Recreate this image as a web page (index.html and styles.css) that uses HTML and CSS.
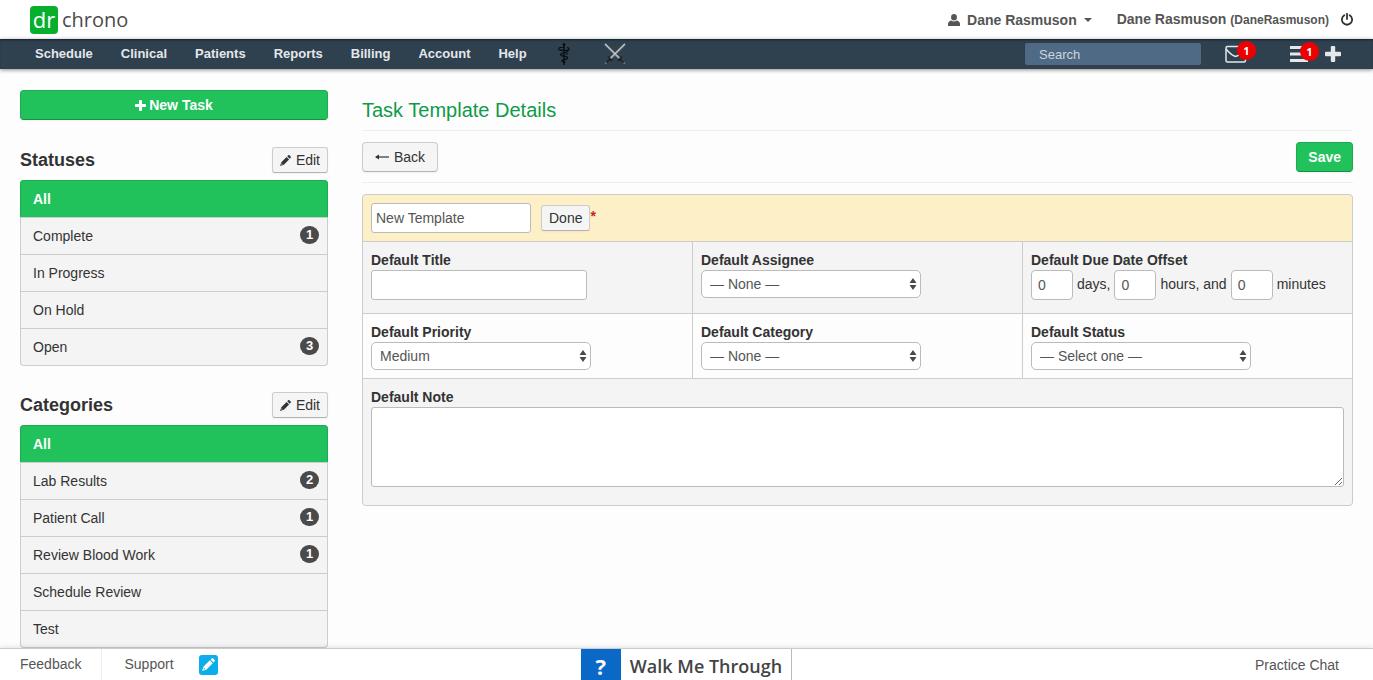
FILE: index.html
```html
<!DOCTYPE html>
<html lang="en">
<head>
<meta charset="utf-8">
<title>Task Template Details</title>
<link rel="stylesheet" href="styles.css">
</head>
<body>
<svg class="defs" aria-hidden="true">
  <symbol id="pencil" viewBox="0 0 12 12"><path d="M7.900 1.400 8.900.4Q9.600-.2 10.300.4L11.600 1.700Q12.200 2.400 11.600 3.100L10.600 4.100ZM7.200 2.100 9.900 4.800 4.200 10.500 0 12 1.500 7.800ZM1.900 9.100 1.500 10.500 2.900 10.100Z" fill-rule="evenodd"/></symbol>
  <symbol id="arrows" viewBox="0 0 8 12"><path d="M4 0 7.500 5H.5ZM4 12 .5 7H7.500Z"/></symbol>
  <symbol id="plus" viewBox="0 0 16 16"><path d="M5.800 1Q5.800 0 6.800 0H9.200Q10.200 0 10.200 1V5.800H15Q16 5.800 16 6.800V9.200Q16 10.200 15 10.200H10.200V15Q10.200 16 9.200 16H6.800Q5.800 16 5.800 15V10.200H1Q0 10.200 0 9.200V6.800Q0 5.800 1 5.800H5.800Z"/></symbol>
</svg>

<header class="top">
  <a class="logo" href="#"><span class="logo-mark">dr</span><span class="logo-text">chrono</span></a>
  <div class="account">
    <button class="user" type="button">
      <svg width="12" height="12" viewBox="0 0 12 12"><ellipse cx="6" cy="3.300" rx="2.900" ry="3.300"/><path d="M0 12V10Q0 7.500 3.300 6.500 6 8.600 8.700 6.500 12 7.500 12 10V12Z"/></svg>
      <span>Dane Rasmuson</span>
      <span class="caret"></span>
    </button>
    <a class="profile" href="#">Dane Rasmuson <small>(DaneRasmuson)</small></a>
    <button class="power" type="button" aria-label="Log out"><svg width="12" height="13" viewBox="0 0 12 13"><path d="M3.300 2.300A5.100 5.100 0 1 0 8.700 2.300M6 .8V6" fill="none" stroke="currentColor" stroke-width="1.800" stroke-linecap="round"/></svg></button>
  </div>
</header>

<nav class="nav">
  <div class="menu">
    <a href="#">Schedule</a><a href="#">Clinical</a><a href="#">Patients</a><a href="#">Reports</a><a href="#">Billing</a><a href="#">Account</a><a href="#">Help</a>
    <a class="caduceus" href="#" aria-label="Medical"><svg width="12" height="22" viewBox="0 0 12 22"><g fill="none" stroke="#0b0f13"><path d="M6 0V22" stroke-width="1.500"/><path d="M6 4.500H2Q.3 5 1 6.500 2 7.500 6 7.500 10.500 7.500 11 6 11.300 4.500 9 4.700M11 6Q10.500 9 6 9.800 2.500 10.500 2.500 11.800 3 13 6 13.200 9.500 13.500 9.500 15 9 16.500 6 16.800 3.500 17 4 18.300 4.500 19 7.500 19.300M8.500 11.500Q9.800 10.800 8.500 10" stroke-width="1.200"/></g><circle cx="6" cy="2" r="1.400"/></svg></a>
    <a class="swords" href="#" aria-label="Swords"><svg width="22" height="22" viewBox="0 0 22 22"><path d="M1 1 16 16M21 1 6 16" stroke="#858b90" stroke-width="2.200"/><path d="M1 .8 15.500 15M21 .8 6.500 15" stroke="#dcdcd8" stroke-width="1"/><path d="M13.500 17.500Q16 16.500 18 13.500M8.500 17.500Q6 16.500 4 13.500M16 16 20 20M6 16 2 20" fill="none" stroke="#202326" stroke-width="1.500"/><circle cx="20.300" cy="20.300" r="1" fill="#777"/><circle cx="1.700" cy="20.300" r="1" fill="#777"/></svg></a>
  </div>
  <div class="tools">
    <input class="search" type="search" placeholder="Search" aria-label="Search">
    <button class="tool mail" type="button" aria-label="Messages"><svg width="22" height="18" viewBox="0 0 22 18"><g fill="none" stroke="#e4e8ec" stroke-width="1.500" stroke-linejoin="round"><rect x="1" y="1.500" width="19.500" height="15.500" rx="1.500"/><path d="M1 4Q7 11 10.700 11.500 14 11 20 4"/></g></svg><span class="alert">1</span></button>
    <button class="tool list" type="button" aria-label="Tasks"><svg width="18" height="16" viewBox="0 0 18 16"><path d="M0 1.500H18M0 8H18M0 14.500H18" stroke="#e4e8ec" stroke-width="3"/></svg><span class="alert">1</span></button>
    <button class="tool" type="button" aria-label="Add"><svg width="16" height="16" fill="#e4e8ec"><use href="#plus"/></svg></button>
  </div>
</nav>

<div class="page">
  <aside class="side">
    <button class="btn primary new" type="button"><svg width="11" height="11"><use href="#plus"/></svg>New Task</button>
    <section class="group">
      <div class="group-head"><h2>Statuses</h2><button class="btn small" type="button"><svg width="11" height="11"><use href="#pencil"/></svg>Edit</button></div>
      <ul class="filter">
        <li><a class="active" href="#">All</a></li>
        <li><a href="#">Complete<span class="count">1</span></a></li>
        <li><a href="#">In Progress</a></li>
        <li><a href="#">On Hold</a></li>
        <li><a href="#">Open<span class="count">3</span></a></li>
      </ul>
    </section>
    <section class="group">
      <div class="group-head"><h2>Categories</h2><button class="btn small" type="button"><svg width="11" height="11"><use href="#pencil"/></svg>Edit</button></div>
      <ul class="filter">
        <li><a class="active" href="#">All</a></li>
        <li><a href="#">Lab Results<span class="count">2</span></a></li>
        <li><a href="#">Patient Call<span class="count">1</span></a></li>
        <li><a href="#">Review Blood Work<span class="count">1</span></a></li>
        <li><a href="#">Schedule Review</a></li>
        <li><a href="#">Test</a></li>
      </ul>
    </section>
  </aside>

  <main class="main">
    <h1>Task Template Details</h1>
    <div class="actions">
      <button class="btn" type="button"><svg width="14" height="8" viewBox="0 0 14 8"><path d="M1 4H14" stroke="currentColor" stroke-width="1.200"/><path d="M0 4 4 1.500V6.500Z"/></svg>Back</button>
      <button class="btn primary" type="submit" form="template">Save</button>
    </div>
    <form class="template" id="template">
      <div class="cell name">
        <input class="text" type="text" value="New Template" aria-label="Template name">
        <button class="btn small" type="button">Done</button><span class="required">*</span>
      </div>
      <div class="cell shade">
        <label for="title">Default Title</label>
        <input class="text title" id="title" type="text">
      </div>
      <div class="cell shade">
        <label for="assignee">Default Assignee</label>
        <span class="select"><select id="assignee"><option>— None —</option></select><svg width="8" height="12"><use href="#arrows"/></svg></span>
      </div>
      <div class="cell shade">
        <label for="days">Default Due Date Offset</label>
        <div class="offset">
          <input class="text" id="days" type="text" value="0"><label for="days">days,</label>
          <input class="text" id="hours" type="text" value="0"><label for="hours">hours, and</label>
          <input class="text" id="minutes" type="text" value="0"><label for="minutes">minutes</label>
        </div>
      </div>
      <div class="cell">
        <label for="priority">Default Priority</label>
        <span class="select"><select id="priority"><option>Medium</option></select><svg width="8" height="12"><use href="#arrows"/></svg></span>
      </div>
      <div class="cell">
        <label for="category">Default Category</label>
        <span class="select"><select id="category"><option>— None —</option></select><svg width="8" height="12"><use href="#arrows"/></svg></span>
      </div>
      <div class="cell">
        <label for="status">Default Status</label>
        <span class="select"><select id="status"><option>— Select one —</option></select><svg width="8" height="12"><use href="#arrows"/></svg></span>
      </div>
      <div class="cell shade note">
        <label for="note">Default Note</label>
        <textarea id="note"></textarea>
      </div>
    </form>
  </main>
</div>

<footer class="foot">
  <div class="foot-left">
    <a class="feedback" href="#">Feedback</a>
    <a class="support" href="#">Support</a>
    <button class="compose" type="button" aria-label="Compose"><svg width="13" height="13"><use href="#pencil"/></svg></button>
  </div>
  <button class="walkme" type="button"><span class="walkme-mark">?</span><span class="walkme-text">Walk Me Through</span></button>
  <a class="chat" href="#">Practice Chat</a>
</footer>
</body>
</html>
```
FILE: styles.css
```css
* {
  box-sizing: border-box;
}

body {
  margin: 0;
  min-height: 100vh;
  display: flex;
  flex-direction: column;
  background: #fdfdfd;
  color: #333;
  font: 14px/20px "Liberation Sans", Arial, sans-serif;
}

a {
  color: inherit;
  text-decoration: none;
}

button,
input,
select,
textarea {
  font: inherit;
  color: inherit;
  margin: 0;
}

button {
  padding: 0;
  border: 0;
  background: none;
}

svg {
  display: block;
  flex: none;
  fill: currentColor;
}

h1,
h2,
ul {
  margin: 0;
  padding: 0;
}

.defs {
  position: absolute;
  width: 0;
  height: 0;
}

/* Header */
.top {
  height: 39px;
  padding: 0 20px 0 30px;
  display: flex;
  align-items: center;
  justify-content: space-between;
  background: #fff;
}

.logo {
  display: flex;
  align-items: center;
  gap: 4px;
  font: 20px/28px "Open Sans", sans-serif;
  color: #4c4c4c;
}

.logo-mark {
  width: 28px;
  height: 28px;
  border-radius: 4px;
  background: #06b02d;
  color: #fff;
  font-size: 22px;
  line-height: 26px;
  text-align: center;
}

.account,
.user {
  display: flex;
  align-items: center;
  font-weight: bold;
  color: #555;
}

.user {
  gap: 7px;
  margin-right: 25px;
}

.caret {
  border: 4px solid transparent;
  border-top-color: #555;
  border-bottom: 0;
}

.profile small {
  font-size: 12px;
}

.power {
  margin-left: 12px;
  color: #333;
}

/* Navigation bar */
.nav {
  height: 30px;
  padding: 0 32px 0 35px;
  display: flex;
  justify-content: space-between;
  background: #2f404f;
  box-shadow: inset 0 2px 2px -1px #16222c, 0 1px 4px rgba(0, 0, 0, .45);
  color: #e4e8ec;
}

.menu,
.tools {
  display: flex;
  align-items: center;
}

.menu {
  gap: 28px;
  font-size: 13px;
  font-weight: bold;
}

.caduceus {
  margin-left: 3px;
  color: #0b0f13;
}

.swords {
  margin-left: 6px;
}

.search {
  width: 178px;
  height: 24px;
  padding: 0 14px;
  border: 1px solid #333c44;
  border-radius: 3px;
  background: #4f6a84;
  font-size: 13px;
  margin-right: 23px;
  appearance: none;
}

.search::placeholder {
  color: #cdd5dc;
}

.tool {
  position: relative;
}

.mail {
  margin-right: 43px;
}

.list {
  margin-right: 17px;
}

.alert {
  position: absolute;
  left: 10px;
  top: -4px;
  width: 19px;
  height: 19px;
  border-radius: 50%;
  background: #ee0000;
  color: #fff;
  font: bold 11px/19px "Open Sans", sans-serif;
  text-align: center;
}

.mail .alert {
  left: 12px;
}

/* Page columns */
.page {
  padding: 21px 20px 0;
  display: grid;
  grid-template-columns: 308px 1fr;
  gap: 34px;
}

.btn {
  height: 30px;
  padding: 0 12px;
  display: inline-flex;
  align-items: center;
  justify-content: center;
  gap: 5px;
  border: 1px solid #ccc;
  border-bottom-color: #b3b3b3;
  border-radius: 4px;
  background: #f5f5f5;
  box-shadow: 0 1px 2px rgba(0, 0, 0, .05);
}

.btn.small {
  height: 26px;
  padding: 0 7px;
  border-radius: 3px;
}

.btn.primary {
  padding: 0 11px;
  border-color: #1cab50;
  border-bottom-color: #178f43;
  background: #21c25c;
  color: #fff;
  font-weight: bold;
}

/* Sidebar */
.new {
  width: 100%;
}

.btn.new {
  gap: 3px;
}

.group {
  margin-top: 26px;
}

.new + .group {
  margin-top: 27px;
}

.group-head {
  display: flex;
  align-items: center;
  justify-content: space-between;
  margin-bottom: 7px;
}

h2 {
  font-size: 18px;
}

.filter {
  list-style: none;
  border: 1px solid #ccc;
  border-top: 0;
  border-radius: 4px;
  background: #f4f4f4;
}

.filter a {
  height: 37px;
  padding: 0 8px 0 12px;
  display: flex;
  align-items: center;
  justify-content: space-between;
  border-top: 1px solid #ccc;
}

.filter .active {
  margin: 0 -1px;
  border: 1px solid #1cab50;
  border-bottom: 0;
  border-radius: 4px 4px 0 0;
  background: #21c25c;
  color: #fff;
  font-weight: bold;
}

.count {
  width: 19px;
  height: 18px;
  border-radius: 9px;
  margin-bottom: 2px;
  background: #4a4a4a;
  color: #fff;
  font-size: 13px;
  font-weight: bold;
  line-height: 18px;
  text-align: center;
}

/* Main column */
.main {
  min-width: 0;
}

h1 {
  padding: 8px 0 7px;
  border-bottom: 1px solid #eee;
  color: #0f9a4a;
  font-size: 20px;
  font-weight: normal;
  line-height: 25px;
}

.actions {
  padding: 11px 0 10px;
  display: flex;
  justify-content: space-between;
  border-bottom: 1px solid #eee;
}

.template {
  margin-top: 11px;
  display: grid;
  grid-template-columns: repeat(3, 1fr);
  gap: 1px;
  border: 1px solid #ccc;
  border-radius: 4px;
  background: #ccc;
  overflow: hidden;
}

.cell {
  padding: 8px;
  background: #fdfdfd;
}

.shade {
  background: #f4f4f4;
}

.cell > label {
  display: block;
  font-weight: bold;
}

.name,
.note {
  grid-column: 1 / -1;
}

.name {
  display: flex;
  align-items: center;
  background: #fef0c6;
}

.name .text {
  width: 160px;
  margin-right: 10px;
}

.required {
  padding-bottom: 4px;
  color: #c22;
  font-weight: bold;
}

.text,
.select select,
textarea {
  display: block;
  border: 1px solid #bbb;
  border-radius: 3px;
  background: #fff;
  color: #555;
}

.text {
  height: 30px;
  padding: 0 4px;
}

.title {
  width: 216px;
  margin-bottom: 5px;
}

.select {
  position: relative;
  display: block;
  width: 220px;
}

.select select {
  width: 100%;
  height: 28px;
  padding: 0 8px;
  border-radius: 5px;
  appearance: none;
}

.select svg {
  position: absolute;
  right: 4px;
  top: 8px;
  color: #4a4a4a;
  pointer-events: none;
}

.offset {
  display: flex;
  gap: 4px;
  line-height: 28px;
}

.offset .text {
  width: 42px;
  padding: 0 6px;
  border-radius: 4px;
}

textarea {
  width: 100%;
  height: 80px;
  margin-bottom: 10px;
  resize: vertical;
}

/* Footer */
.foot {
  position: relative;
  height: 32px;
  margin-top: auto;
  padding: 0 20px;
  display: grid;
  grid-template-columns: 1fr auto 1fr;
  align-items: center;
  border-top: 1px solid #ccc;
  background: #fff;
  box-shadow: 0 0 6px rgba(0, 0, 0, .15);
  color: #555;
}

.foot-left {
  height: 100%;
  display: flex;
  align-items: center;
}

.feedback,
.support {
  line-height: 31px;
}

.feedback {
  padding-right: 20px;
  margin-right: 22px;
  border-right: 1px solid #eee;
}

.compose {
  width: 19px;
  height: 20px;
  margin-left: 25px;
  display: grid;
  place-items: center;
  border-radius: 3px;
  background: #0badea;
  color: #fff;
}

.walkme {
  height: 31px;
  display: flex;
  border-right: 1px solid #bbb;
  color: #444;
  font: 600 18px/28px "Open Sans", sans-serif;
}

.walkme-mark,
.walkme-text {
  height: 31px;
  padding: 3px 9px 0;
}

.walkme-mark {
  width: 40px;
  background: #0a68c6;
  color: #fff;
  font-size: 22px;
  font-weight: bold;
}

.chat {
  justify-self: end;
  margin-right: 14px;
}
```
